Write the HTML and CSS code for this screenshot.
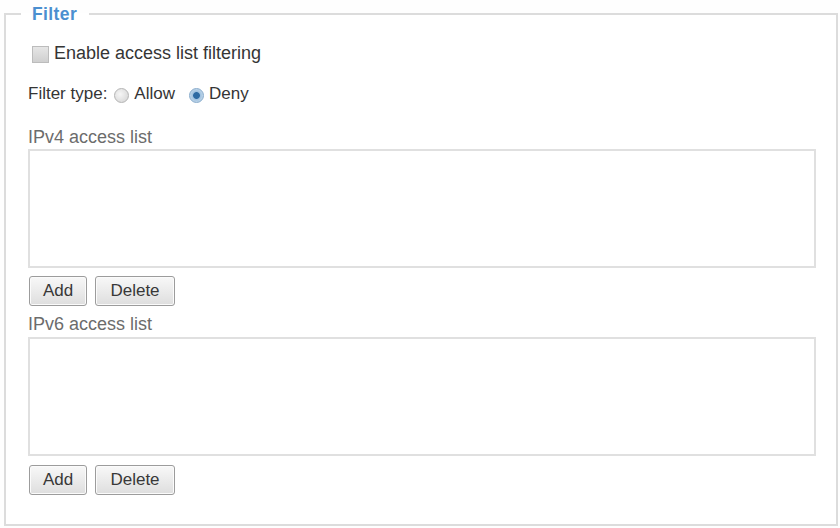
FILE: index.html
```html
<!DOCTYPE html>
<html>
<head>
<meta charset="utf-8">
<link rel="stylesheet" href="styles.css">
</head>
<body>
<fieldset class="panel">
  <legend class="legend">Filter</legend>
  <div class="row check-row">
    <span class="checkbox"></span>
    <span class="dark">Enable access list filtering</span>
  </div>
  <div class="row type-row">
    <span class="dark">Filter type:</span>
    <span class="radio"></span><span class="dark">Allow</span>
    <span class="radio on"></span><span class="dark">Deny</span>
  </div>
  <div class="label">IPv4 access list</div>
  <div class="listbox"></div>
  <div class="buttons">
    <span class="btn add">Add</span>
    <span class="btn del">Delete</span>
  </div>
  <div class="label label6">IPv6 access list</div>
  <div class="listbox"></div>
  <div class="buttons">
    <span class="btn add">Add</span>
    <span class="btn del">Delete</span>
  </div>
</fieldset>
</body>
</html>
```

FILE: styles.css
```css
html, body {
  margin: 0;
  padding: 0;
  background: #fefefe;
}
body {
  width: 840px;
  height: 528px;
  font-family: "Liberation Sans", Arial, sans-serif;
  font-size: 17px;
  color: #444;
  padding: 4px 2px 0 4px;
  box-sizing: border-box;
}
.panel {
  margin: 0;
  border: 2px solid #dcdcdc;
  border-radius: 0;
  padding: 0 20px 0 22px;
  height: 522px;
  box-sizing: border-box;
  background: #fff;
}
.legend {
  margin-left: -7px;
  padding: 0 12px 0 11px;
  color: #4b8fd0;
  font-weight: bold;
  font-size: 17.5px;
  letter-spacing: 0.4px;
  line-height: 20px;
}
.row {
  display: flex;
  align-items: center;
  line-height: 20px;
}
.dark {
  color: #353535;
}
.check-row {
  margin-top: 19px;
  margin-left: 4px;
  gap: 5px;
  font-size: 18px;
}
.checkbox {
  width: 17px;
  height: 17px;
  box-sizing: border-box;
  border: 1px solid #bcbcbc;
  background: linear-gradient(#e6e6e6, #cfcfcf);
  margin-top: 3px;
}
.type-row {
  margin-top: 21px;
  font-size: 17px;
}
.radio {
  width: 15px;
  height: 15px;
  border-radius: 50%;
  border: 1px solid #b4b4b4;
  background: radial-gradient(circle at 40% 40%, #f6f6f6, #d2d2d2);
  margin: 0 5px 0 7px;
  box-sizing: border-box;
  position: relative;
  top: 1px;
}
.radio + .dark {
  margin-right: 7px;
}
.radio.on {
  border-color: #86aacb;
  background: radial-gradient(circle, #2d6aa3 0 3px, #9fc1df 3.8px, #dce9f4 100%);
}
.label {
  color: #6c6c6c;
  font-size: 18px;
  margin-top: 23px;
  line-height: 20px;
}
.listbox {
  margin-top: 2px;
  height: 119px;
  border: 2px solid #e0e0e0;
  background: #fff;
  box-sizing: border-box;
}
.buttons {
  display: flex;
  gap: 8px;
  margin-top: 8px;
  margin-left: 1px;
}
.btn {
  height: 30px;
  box-sizing: border-box;
  border: 1px solid #9c9c9c;
  border-radius: 3px;
  background: linear-gradient(#f8f8f8, #dedede);
  box-shadow: inset 0 0 0 1px #fbfbfb;
  color: #383838;
  display: flex;
  align-items: center;
  justify-content: center;
  font-size: 17px;
}
.add { width: 58px; }
.del { width: 80px; }
.label6 {
  margin-top: 8px;
}
.label6 + .listbox {
  margin-top: 3px;
}
.label6 + .listbox + .buttons {
  margin-top: 9px;
}
```
